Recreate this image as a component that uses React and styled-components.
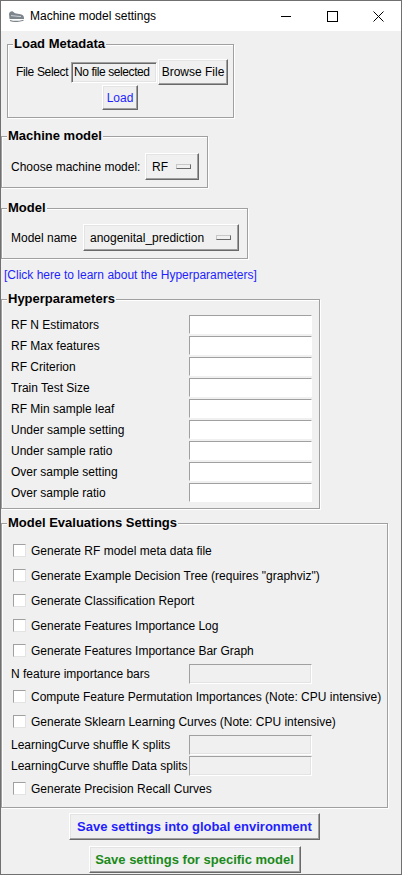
import React from "react";
import styled, { createGlobalStyle } from "styled-components";

const Global = createGlobalStyle`
  html, body { margin: 0; padding: 0; background: #f0f0f0; }
  body { font-family: "Liberation Sans", Arial, sans-serif; font-size: 12px; color: #000; }
  * { box-sizing: border-box; }
`;

const Window = styled.div`
  width: 402px;
  height: 875px;
  border: 1px solid #707070;
  background: #f0f0f0;
  overflow: hidden;
  display: flex;
  flex-direction: column;
`;

const TitleBar = styled.div`
  height: 30px;
  flex: none;
  background: #fff;
  display: flex;
  align-items: center;
`;

const AppIcon = styled.svg`
  flex: none;
  width: 17px;
  height: 12px;
  margin-left: 7px;
`;

const Title = styled.div`
  flex: 1;
  margin-left: 5px;
  font-size: 12px;
  line-height: 16px;
  white-space: nowrap;
`;

const Controls = styled.div`
  display: flex;
  height: 100%;
`;

const Ctrl = styled.div`
  width: 46px;
  height: 100%;
  display: flex;
  align-items: center;
  justify-content: center;
`;

const Body = styled.div`
  width: fit-content;
  padding-top: 5px;
  display: flex;
  flex-direction: column;
  align-items: flex-start;
`;

const Frame = styled.fieldset`
  margin: ${(p) => p.$mt || 0}px 0 0 ${(p) => p.$ml || 0}px;
  padding: 0;
  min-width: 0;
  width: ${(p) => p.$w}px;
  border: 1px solid #a0a0a0;
  box-shadow: inset 1px 1px 0 #fff, 1px 1px 0 #fff;
`;

const Legend = styled.legend`
  margin-left: 5px;
  padding: 0 1px;
  font-size: 13px;
  font-weight: bold;
  line-height: 16px;
  background: #f0f0f0;
  white-space: nowrap;
`;

const FrameBody = styled.div`
  padding: ${(p) => p.$pad};
  display: flex;
  flex-direction: column;
`;

const FormRow = styled.div`
  display: grid;
  grid-template-columns: ${(p) => p.$cols};
  align-items: center;
  height: ${(p) => p.$h}px;
`;

const Label = styled.span`
  white-space: nowrap;
  line-height: 16px;
  letter-spacing: ${(p) => p.$ls || 0}px;
`;

const TkButton = styled.button`
  font-family: "Liberation Sans", Arial, sans-serif;
  font-size: ${(p) => p.$fs || 12}px;
  font-weight: ${(p) => (p.$bold ? "bold" : "normal")};
  color: ${(p) => p.$color || "#000"};
  width: ${(p) => p.$w}px;
  height: ${(p) => p.$h}px;
  margin: ${(p) => p.$m || 0};
  padding: 0;
  background: #f0f0f0;
  border: 1px solid;
  border-color: #fff #696969 #696969 #fff;
  box-shadow: inset -1px -1px 0 #a0a0a0, inset 1px 1px 0 #e3e3e3;
  display: flex;
  align-items: center;
  justify-content: center;
  white-space: nowrap;
  line-height: 16px;
  flex: none;
`;

const ReadonlyEntry = styled.div`
  width: ${(p) => p.$w}px;
  height: 21px;
  padding: 0 2px;
  background: #f0f0f0;
  border: 1px solid;
  border-color: #a0a0a0 #fff #fff #a0a0a0;
  box-shadow: inset 1px 1px 0 #696969, inset -1px -1px 0 #e3e3e3;
  display: flex;
  align-items: center;
  white-space: nowrap;
  overflow: hidden;
  letter-spacing: -0.4px;
`;

const Entry = styled.div`
  width: 123px;
  height: ${(p) => p.$h}px;
  background: ${(p) => (p.$disabled ? "#f0f0f0" : "#fff")};
  border: 1px solid;
  border-color: #a0a0a0 #fff #fff #a0a0a0;
  box-shadow: ${(p) =>
    p.$disabled ? "inset -1px -1px 0 #e3e3e3" : "none"};
`;

const OptionMenu = styled.div`
  width: ${(p) => p.$w}px;
  height: 27px;
  padding: 0 7px 0 6px;
  background: #f0f0f0;
  border: 1px solid;
  border-color: #fff #696969 #696969 #fff;
  box-shadow: inset -1px -1px 0 #a0a0a0, inset 1px 1px 0 #e3e3e3;
  display: flex;
  align-items: center;
  justify-content: space-between;
  white-space: nowrap;
`;

const Indicator = styled.span`
  width: 15px;
  height: 5px;
  flex: none;
  background: #f0f0f0;
  border: 1px solid;
  border-color: #c8c8c8 #696969 #696969 #c8c8c8;
`;

const Link = styled.div`
  margin: 8px 0 0 3px;
  color: #1f1fff;
  line-height: 16px;
  white-space: nowrap;
`;

const CheckRow = styled.div`
  height: 25px;
  padding-left: 2px;
  display: flex;
  align-items: center;
  gap: 5px;
  white-space: nowrap;
`;

const CheckBox = styled.span`
  width: 13px;
  height: 13px;
  flex: none;
  background: #fff;
  border: 1px solid;
  border-color: #a0a0a0 #e3e3e3 #e3e3e3 #a0a0a0;
`;

const ButtonStack = styled.div`
  align-self: center;
  display: flex;
  flex-direction: column;
  align-items: center;
`;

const hyper = [
  "RF N Estimators",
  "RF Max features",
  "RF Criterion",
  "Train Test Size",
  "RF Min sample leaf",
  "Under sample setting",
  "Under sample ratio",
  "Over sample setting",
  "Over sample ratio",
];

const evalItems = [
  { t: "check", l: "Generate RF model meta data file" },
  { t: "check", l: 'Generate Example Decision Tree (requires "graphviz")' },
  { t: "check", l: "Generate Classification Report" },
  { t: "check", l: "Generate Features Importance Log" },
  { t: "check", l: "Generate Features Importance Bar Graph" },
  { t: "entry", l: "N feature importance bars" },
  { t: "check", l: "Compute Feature Permutation Importances (Note: CPU intensive)" },
  { t: "check", l: "Generate Sklearn Learning Curves (Note: CPU intensive)" },
  { t: "entry", l: "LearningCurve shuffle K splits" },
  { t: "entry", l: "LearningCurve shuffle Data splits" },
  { t: "check", l: "Generate Precision Recall Curves" },
];

export default function App() {
  return (
    <>
      <Global />
      <Window>
        <TitleBar>
          <AppIcon viewBox="0 0 17 12">
            <path d="M1 4 Q1.5 1 4.5 1.2 L7 3.2 L12.5 4.2 Q16 5 16 8 L16 9 L1.5 9 Z" fill="#7d858c" />
            <path d="M3 5.6 L13 6.6" stroke="#cfd3d6" strokeWidth="1" />
            <path d="M2 10.5 Q8 12.5 15.5 10.2" stroke="#7d858c" strokeWidth="1.2" fill="none" />
          </AppIcon>
          <Title>Machine model settings</Title>
          <Controls>
            <Ctrl>
              <svg width="10" height="10" viewBox="0 0 10 10">
                <path d="M0 5.5 H10" stroke="#000" strokeWidth="1" />
              </svg>
            </Ctrl>
            <Ctrl>
              <svg width="11" height="11" viewBox="0 0 11 11">
                <rect x="0.5" y="0.5" width="10" height="10" stroke="#000" strokeWidth="1" fill="none" />
              </svg>
            </Ctrl>
            <Ctrl>
              <svg width="11" height="11" viewBox="0 0 11 11">
                <path d="M0.5 0.5 L10.5 10.5 M10.5 0.5 L0.5 10.5" stroke="#000" strokeWidth="1" />
              </svg>
            </Ctrl>
          </Controls>
        </TitleBar>

        <Body>
          <Frame $w={227} $ml={6}>
            <Legend>Load Metadata</Legend>
            <FrameBody $pad="7px 4px 7px 8px">
              <FormRow $cols="55px 87px 70px" $h={26}>
                <Label $ls={-0.35}>File Select</Label>
                <ReadonlyEntry $w={86}>No file selected</ReadonlyEntry>
                <TkButton $w={70} $h={26}>Browse File</TkButton>
              </FormRow>
              <TkButton $w={36} $h={25} $m="0 0 0 86px" $color="#1f1fff">
                Load
              </TkButton>
            </FrameBody>
          </Frame>

          <Frame $w={207} $mt={10}>
            <Legend>Machine model</Legend>
            <FrameBody $pad="9px 8px 7px 9px">
              <FormRow $cols="134px 54px" $h={27}>
                <Label>Choose machine model:</Label>
                <OptionMenu $w={54}>
                  <span>RF</span>
                  <Indicator />
                </OptionMenu>
              </FormRow>
            </FrameBody>
          </Frame>

          <Frame $w={247} $mt={12}>
            <Legend>Model</Legend>
            <FrameBody $pad="8px 8px 7px 9px">
              <FormRow $cols="72px 156px" $h={27}>
                <Label>Model name</Label>
                <OptionMenu $w={156}>
                  <span>anogenital_prediction</span>
                  <Indicator />
                </OptionMenu>
              </FormRow>
            </FrameBody>
          </Frame>

          <Link>[Click here to learn about the Hyperparameters]</Link>

          <Frame $w={319} $mt={8}>
            <Legend>Hyperparameters</Legend>
            <FrameBody $pad="7px 6px 5px 9px">
              {hyper.map((h) => (
                <FormRow key={h} $cols="178px 123px" $h={21}>
                  <Label>{h}</Label>
                  <Entry $h={19} />
                </FormRow>
              ))}
            </FrameBody>
          </Frame>

          <Frame $w={387} $mt={6}>
            <Legend>Model Evaluations Settings</Legend>
            <FrameBody $pad="7px 6px 6px 9px">
              {evalItems.map((it) =>
                it.t === "check" ? (
                  <CheckRow key={it.l}>
                    <CheckBox />
                    <Label>{it.l}</Label>
                  </CheckRow>
                ) : (
                  <FormRow key={it.l} $cols="178px 123px" $h={21}>
                    <Label>{it.l}</Label>
                    <Entry $h={20} $disabled />
                  </FormRow>
                )
              )}
            </FrameBody>
          </Frame>

          <ButtonStack>
            <TkButton $w={251} $h={27} $m="5px 0 0 0" $fs={13} $bold $color="#1f1fff">
              Save settings into global environment
            </TkButton>
            <TkButton $w={212} $h={27} $m="6px 0 0 0" $fs={13} $bold $color="#1a8a1a">
              Save settings for specific model
            </TkButton>
          </ButtonStack>
        </Body>
      </Window>
    </>
  );
}
